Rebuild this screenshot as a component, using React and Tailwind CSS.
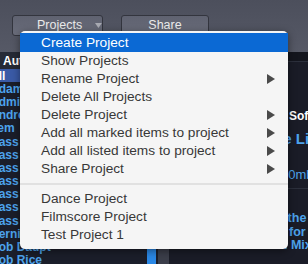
import React from "react";

const ITEMS = [
  { label: "Create Project", active: true },
  { label: "Show Projects" },
  { label: "Rename Project", sub: true },
  { label: "Delete All Projects" },
  { label: "Delete Project", sub: true },
  { label: "Add all marked items to project", sub: true },
  { label: "Add all listed items to project", sub: true },
  { label: "Share Project", sub: true },
];

const PROJECTS = ["Dance Project", "Filmscore Project", "Test Project 1"];

const AUTHORS = [
  "Adam", "Admin I", "Andrew", "Item", "Bass -", "Bass -", "Bass -",
  "Bass -", "Bass -", "Bass -", "Bass -",
  "Bernice", "Bob Daupt", "Bob Rice",
];

function Arrow() {
  return (
    <svg width="8" height="10" viewBox="0 0 8 10" className="shrink-0">
      <polygon points="0,0 8,5 0,10" fill="#4a4a4a" />
    </svg>
  );
}

function MenuItem({ label, active, sub, first }) {
  return (
    <div
      className={`flex items-center justify-between pl-[21px] pr-[13px] ${first ? "h-[19px]" : "h-[18px]"} ${
        active ? "bg-[#0b69d4] text-white" : "text-[#383838]"
      }`}
    >
      <span className="text-[13.7px] leading-none">{label}</span>
      {sub && <Arrow />}
    </div>
  );
}

export default function App() {
  return (
    <div
      className="relative w-[308px] h-[264px] overflow-hidden bg-[#1a1d28]"
      style={{ fontFamily: '"Liberation Sans", Arial, sans-serif' }}
    >
      {/* toolbar */}
      <div className="h-[52px] bg-gradient-to-b from-[#4c4f5c] to-[#565966] pt-[15px] pl-[12px] flex gap-[18px]">
        <div className="w-[91px] h-[21px] rounded-[3px] border border-[#33353e] bg-gradient-to-b from-[#5f6270] to-[#6a6d7b] flex items-center pl-[24px]">
          <span className="text-[12.5px] text-[#ececec]">Projects</span>
          <svg width="7" height="5" viewBox="0 0 7 5" className="ml-[13px]">
            <polygon points="0,0 7,0 3.5,5" fill="#a9abb3" />
          </svg>
        </div>
        <div className="w-[88px] h-[21px] rounded-[3px] border border-[#33353e] bg-gradient-to-b from-[#5f6270] to-[#6a6d7b] flex items-center justify-center">
          <span className="text-[12.5px] text-[#ececec]">Share</span>
        </div>
      </div>

      {/* content */}
      <div className="flex h-[212px]">
        <div className="w-[147px] bg-[#1b1e2a] overflow-hidden">
          <div className="h-[17px] bg-[#262a36] flex items-center pl-[3px]">
            <span className="text-[12px] font-bold text-white leading-none">Author</span>
          </div>
          <div className="h-[13.2px] bg-[#3a5aa6] flex items-center -ml-[10px]">
            <span className="text-[12px] font-bold text-white leading-none">All</span>
          </div>
          {AUTHORS.map((a, i) => (
            <div key={i} className="h-[13.2px] flex items-center -ml-[10px]">
              <span className="text-[12px] font-bold text-[#4da3ec] leading-none whitespace-nowrap">{a}</span>
            </div>
          ))}
        </div>
        <div className="w-[9px] bg-[#2a88e6]" />
        <div className="w-[2px] bg-[#1b1e2a]" />
        <div className="w-[11px] bg-[#3b3e4a]" />
        <div className="flex-1 bg-[#1a1c27] overflow-hidden">
          <div className="h-[10px] bg-[#14161e] border-b border-[#2c303c]" />
          <div className="h-[60px] flex items-end pl-[120px]">
            <span className="text-[12px] font-bold text-white leading-none whitespace-nowrap">Software</span>
          </div>
          <div className="h-[24px] flex items-end pl-[96px]">
            <span className="text-[15px] font-bold text-[#4da3ec] leading-none whitespace-nowrap">The Library</span>
          </div>
          <div className="h-[35px] flex items-end pl-[112px]">
            <span className="text-[13px] text-[#4da3ec] leading-none whitespace-nowrap">10mb</span>
          </div>
          <div className="h-[8px] border-b border-[#2c303c]" />
          <div className="pt-[23px] flex flex-col gap-[1px] pl-[104px]">
            <span className="text-[12.5px] font-bold text-[#4da3ec] leading-none whitespace-nowrap">in the genre</span>
            <span className="text-[12.5px] font-bold text-[#4da3ec] leading-none whitespace-nowrap pl-[16px]">for mixing</span>
            <span className="text-[12.5px] font-bold text-[#4da3ec] leading-none whitespace-nowrap pl-[11px]">. Mix</span>
          </div>
        </div>
      </div>

      {/* dropdown menu */}
      <div className="absolute left-[20px] top-[31px] w-[268px] bg-[#f5f5f5] rounded-[5px] pt-[2px] pb-[5px] shadow-[0_2px_8px_rgba(0,0,0,0.45)]">
        {ITEMS.map((it, i) => (
          <MenuItem key={it.label} {...it} first={i === 0} />
        ))}
        <div className="h-[12px] flex items-center">
          <div className="w-full h-[2px] bg-[#e1e1e1]" />
        </div>
        {PROJECTS.map((p) => (
          <MenuItem key={p} label={p} />
        ))}
      </div>
    </div>
  );
}
